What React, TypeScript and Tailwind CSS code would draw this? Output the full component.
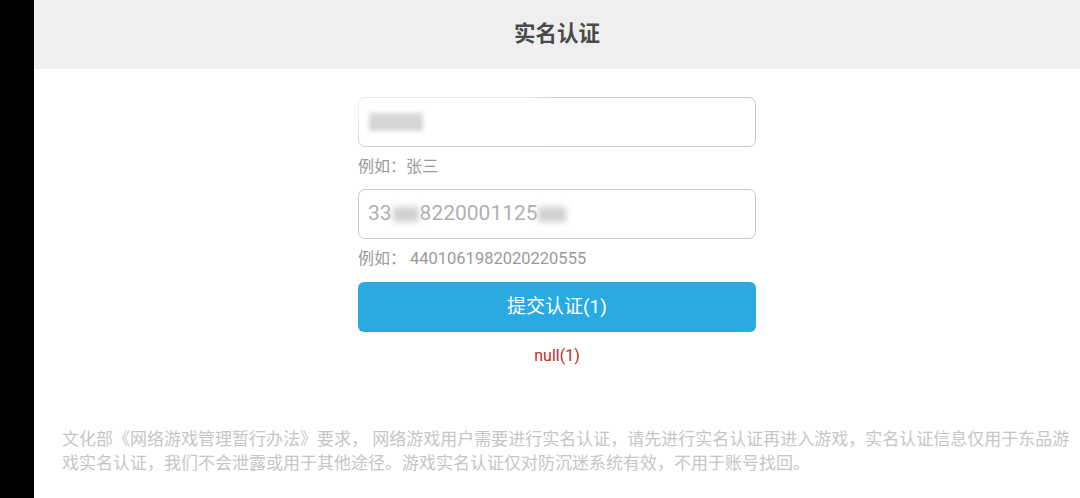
import React from "react";

const font = { fontFamily: 'Roboto, "Noto Sans CJK SC", "Noto Sans", sans-serif' };

export default function App() {
  return (
    <div className="flex h-[498px] w-[1080px] overflow-hidden bg-black" style={font}>
      <div className="w-[34px] shrink-0 bg-black" />
      <div className="flex min-w-0 flex-1 flex-col overflow-hidden bg-white">
        <div className="flex h-[69px] items-center justify-center bg-[#efefef]">
          <span className="text-[21.5px] font-bold text-[#4a4a4a]">实名认证</span>
        </div>
        <div className="flex flex-col items-center pt-[28px]">
          <div className="relative flex h-[50px] w-[398px] items-center rounded-[7px] border border-[#c8c8c8] px-[10px]">
            <div className="pointer-events-none absolute left-[-20px] top-[-10px] h-[48px] w-[210px] rounded-full bg-white/80 blur-md" />
            <div className="relative h-[18px] w-[54px] bg-[#d6d6d6] blur-[2px]" />
          </div>
          <div className="mt-[10px] w-[398px] text-[16px] leading-[20px] text-[#9a9a9a]">例如：张三</div>
          <div className="mt-[12px] flex h-[50px] w-[398px] items-center rounded-[7px] border border-[#c8c8c8] px-[9px] text-[21px] text-[#b0b0b0]">
            <span>33</span>
            <span className="mx-[1px] inline-block h-[15px] w-[26px] bg-[#d0d0d0] blur-[3px]" />
            <span>8220001125</span>
            <span className="inline-block h-[15px] w-[28px] bg-[#d0d0d0] blur-[3px]" />
          </div>
          <div className="mt-[10px] w-[398px] text-[16px] leading-[20px] text-[#9a9a9a]">
            例如：&nbsp;<span className="text-[16.5px]">4401061982020220555</span>
          </div>
          <div className="mt-[13px] flex h-[50px] w-[398px] items-center justify-center rounded-[6px] bg-[#29abe2] text-[19px] text-white">
            提交认证(1)
          </div>
          <div className="mt-[14px] text-[16px] leading-[20px] text-[#d01f1f]">null(1)</div>
        </div>
        <div className="mt-[61px] px-[28px] text-[17px] leading-[24px] text-[#c6c6c6]">
          <div className="whitespace-nowrap">文化部《网络游戏管理暂行办法》要求， 网络游戏用户需要进行实名认证，请先进行实名认证再进入游戏，实名认证信息仅用于东品游</div>
          <div className="whitespace-nowrap">戏实名认证，我们不会泄露或用于其他途径。游戏实名认证仅对防沉迷系统有效，不用于账号找回。</div>
        </div>
      </div>
    </div>
  );
}
